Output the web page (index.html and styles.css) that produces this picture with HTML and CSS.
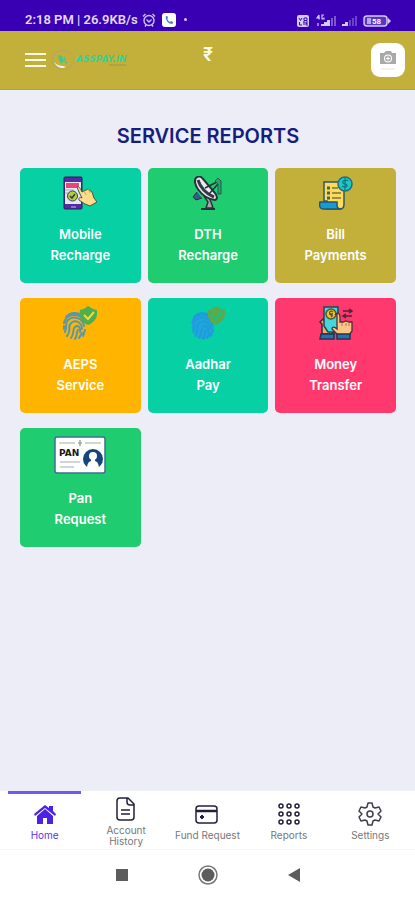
FILE: index.html
```html
<!DOCTYPE html>
<html lang="en">
<head>
    <meta charset="UTF-8">
    <meta name="viewport" content="width=device-width, initial-scale=1.0">
    <title>Service Reports</title>
    <link rel="stylesheet" href="styles.css">
</head>
<body>
    <div class="status-bar">
        <span class="status-text">2:18 PM | 26.9KB/s</span>
        <svg width="14" height="14" viewBox="0 0 14 14" fill="none" stroke="#cfc2f5" stroke-width="1.4">
            <circle cx="7" cy="7.5" r="5"/>
            <path d="M1 3.5 3.5 1M13 3.5 10.500 1M4.500 6.500 7 9l2.500-2.500M4 12l-1 1.500M10 12l1 1.500"/>
        </svg>
        <svg class="call" width="14" height="14" viewBox="0 0 14 14">
            <rect width="14" height="14" rx="3" fill="#fff"/>
            <path d="M4 3c-1 4 2 8 6.500 8l.5-2-2-1-1 1C6.500 8 5.500 7 5.300 6L6 5 5.300 3z" fill="#3f7fd6"/>
        </svg>
        <span class="dot"></span>
        <svg class="signals" width="96" height="16" viewBox="0 0 96 16">
            <rect x="1" y="3" width="12" height="12" rx="2" fill="#d5c9f7"/>
            <path d="M3 6l1.500 2.500L6 6M8 6h3v2.500H8zM3.500 10v3H6M7 10h2M8 10v3M12 10h-2v3h2M10 11.500h1.500" fill="none" stroke="#3a0ab0" stroke-width="1"/>
            <path d="M23 3l-2 3h3M23 3v4.500M28 3h-2v4h2V5.500M22 11v3" fill="none" stroke="#d5c9f7" stroke-width="1.200"/>
            <path d="M25 14v-2h3v2zM28 14v-4h3v4zM31 14V8h3v6z" fill="#d5c9f7"/>
            <path d="M35 14V6h2v8zM38 14V4h2v10z" fill="#7c57d0"/>
            <path d="M46 14v-2h3v2zM49 14v-4h3v4z" fill="#d5c9f7"/>
            <path d="M53 14V8h2v6zM56 14V6h2v8zM59 14V4h2v10z" fill="#6a42c8"/>
            <rect x="68" y="4" width="23" height="10" rx="3" fill="#5a35bf" stroke="#d5c9f7" stroke-width="1.500"/>
            <path d="M92 6l3 3-3 3z" fill="#d5c9f7"/>
            <rect x="71" y="6" width="4" height="6" fill="#b7a4ec"/>
            <text x="76" y="12" class="battery">58</text>
        </svg>
    </div>

    <header class="app-header">
        <button class="menu" aria-label="Menu"><i></i><i></i><i></i></button>
        <a class="brand" href="#" aria-label="ASSPAY.IN">
            <svg width="84" height="24" viewBox="0 0 84 24">
                <ellipse cx="12" cy="12" rx="11" ry="9.500" fill="none" stroke="#b7a267" stroke-width="1"/>
                <path d="M7 7l4 1 2 5-3 3-2-4zM13 8l2 4-2 1zM13 13l4 1-2 2z" fill="#4cc584"/>
                <path d="M3 14c3 3 6 4 9 4l3 1c-4 2-9 1-12-5z" fill="#edf8ef"/>
                <text x="25" y="14" class="brand-name">ASSPAY.IN</text>
                <path d="M58 17h17" stroke="#9a9650" stroke-width="1"/>
            </svg>
        </a>
        <span class="balance">₹</span>
        <button class="photo" aria-label="Photo">
            <svg width="18" height="22" viewBox="0 0 18 22">
                <path d="M1 4h4l2-2h5l1 2h4v11H1z" fill="#a9a9a9"/>
                <circle cx="9" cy="9.500" r="4" fill="#fff"/>
                <circle cx="9" cy="9.500" r="3" fill="#a9a9a9"/>
                <path d="M7 9.500h4M9 7.500v4" stroke="#fff"/>
                <path d="M2 20h14" stroke="#e6e6e6"/>
            </svg>
        </button>
    </header>

    <main>
        <h1>SERVICE REPORTS</h1>
        <div class="services">
            <a class="card teal" href="#">
                <svg width="34" height="34" viewBox="0 0 34 34">
                    <rect x="1" y="1" width="18" height="32" rx="1" fill="#5929a5" stroke="#25224e"/>
                    <rect x="2" y="6" width="16" height="22" fill="#dfe9f5"/>
                    <rect x="3" y="7" width="13" height="5" fill="#e84775"/>
                    <path d="M2 14h9M2 17h5" stroke="#a7adcc"/>
                    <circle cx="9.500" cy="20" r="5" fill="#b4cf3b" stroke="#3b4850"/>
                    <path d="M7 20l2 2 3-4" fill="none" stroke="#303c40" stroke-width="1.500"/>
                    <path d="M8 31h5" stroke="#c4b5f2"/>
                    <path d="M14 11c2-1 3 1 5 5l6-3 4 3 2 6 3 4-7 4-5-2-6-4c-1-2 1-3 3-2l-3-6z" fill="#ffdb8b" stroke="#4f553e"/>
                    <path d="M21 15l2 4M25 13l2 4" stroke="#d5a95d"/>
                </svg>
                <span>Mobile<br>Recharge</span>
            </a>
            <a class="card green" href="#">
                <svg width="34" height="34" viewBox="0 0 34 34">
                    <path d="M13 20l4 6-2 6h7l-2-6-4-8" fill="#aaa" stroke="#29333a" stroke-width="1.500"/>
                    <path d="M6 16l-4 5 3 3 6-2" fill="#315d8b" stroke="#26333e"/>
                    <path d="M5 2C1 6 9 22 24 24c3-1 2-4 0-7L12 3C10 0 7 0 5 2z" fill="#eaeaf0" stroke="#26323b" stroke-width="2"/>
                    <path d="M7 4c2 7 8 14 16 17" fill="none" stroke="#333a43" stroke-width="3"/>
                    <path d="M14 12L26 6M18 18l9-10" stroke="#26323b" stroke-width="1.500"/>
                    <path d="M24 5l3-3 3 3v13h-3V8z" fill="#24a66c" stroke="#25594a"/>
                    <path d="M10 33h14" stroke="#26323b" stroke-width="2"/>
                </svg>
                <span>DTH<br>Recharge</span>
            </a>
            <a class="card gold" href="#">
                <svg width="34" height="34" viewBox="0 0 34 34">
                    <path d="M5 6h20v22c0 3-1 5-4 5H8V25H5z" fill="#ffdb5b" stroke="#315b60" stroke-width="1.500"/>
                    <path d="M1 26h17v3c0 3 1 4 4 4H4c-3 0-4-3-3-7z" fill="#159bd5" stroke="#245673" stroke-width="1.500"/>
                    <path d="M8 12h3M8 17h3M8 22h3" stroke="#3b6557" stroke-width="3"/>
                    <path d="M13 12h6M13 17h9M13 22h9" stroke="#78763d" stroke-width="1.500"/>
                    <circle cx="26" cy="8" r="7" fill="#17cbca" stroke="#246e77" stroke-width="1.500"/>
                    <path d="M29 5c-3-2-6 0-5 2s5 1 4 3-4 1-5 0M26 2v12" fill="none" stroke="#197582" stroke-width="1.300"/>
                </svg>
                <span>Bill<br>Payments</span>
            </a>
            <a class="card orange" href="#">
                <svg width="34" height="34" viewBox="0 0 34 34">
                    <g fill="none" stroke="#5897ad" stroke-width="2" stroke-linecap="round">
                        <path d="M3 11c4-5 11-5 15-2M1 17c2-9 14-11 20-3M2 26c3-7-1-8 3-12 5-5 15-2 16 6"/>
                        <path d="M4 30c5-6 0-9 4-13 5-4 11 0 11 6M8 32c4-5 1-9 4-11 3-3 6 1 5 5M12 33c3-4 1-7 3-9M16 32l3-5M20 30l2-6M1 20v3"/>
                    </g>
                    <path d="M17 4q5-1 8-4 4 3 9 4c1 7-2 12-9 15-7-3-9-8-8-15z" fill="#4caf50"/>
                    <path d="M21 9l4 4 6-7" fill="none" stroke="#ffd43c" stroke-width="2"/>
                </svg>
                <span>AEPS<br>Service</span>
            </a>
            <a class="card teal" href="#">
                <svg width="34" height="34" viewBox="0 0 34 34">
                    <path d="M2 12C5 5 17 4 20 13l3 7c1 7-4 14-11 13-8 0-12-8-11-15z" fill="#1aaad5"/>
                    <g fill="none" stroke="#2694e5" stroke-width="1.500" stroke-linecap="round">
                        <path d="M3 11c4-5 11-5 15-2M1 17c2-9 14-11 20-3M2 26c3-7-1-8 3-12 5-5 15-2 16 6"/>
                        <path d="M4 30c5-6 0-9 4-13 5-4 11 0 11 6M8 32c4-5 1-9 4-11 3-3 6 1 5 5M12 33c3-4 1-7 3-9M16 32l3-5M20 30l2-6"/>
                    </g>
                    <path d="M17 4q5-1 8-4 4 3 9 4c1 7-2 12-9 15-7-3-9-8-8-15z" fill="#58ac4e"/>
                    <path d="M21 9l4 4 6-7" fill="none" stroke="#23c07d" stroke-width="2"/>
                </svg>
                <span>Aadhar<br>Pay</span>
            </a>
            <a class="card pink" href="#">
                <svg width="34" height="34" viewBox="0 0 34 34">
                    <path d="M3 28V18l-2-2 3-3 4 5 7 10z" fill="#e8ad72" stroke="#332d3b" stroke-width="1.500"/>
                    <path d="M5 1h14v25H9L5 20z" fill="#44d8db" stroke="#244450" stroke-width="1.500"/>
                    <circle cx="12" cy="8" r="5" fill="#f5bf2c" stroke="#52582f" stroke-width="1.500"/>
                    <path d="M14 6c-3-2-4 0-3 2s4 1 1 3M10 8h4" fill="none" stroke="#5b5529" stroke-width="1.300"/>
                    <path d="M17 8c2-2 4 0 4 3v5h3l3-1 3 1h3v9l-3 4H19l-6-6c0-2 2-3 5 0V8z" fill="#ffc487" stroke="#493038" stroke-width="1.300"/>
                    <path d="M23 17v3M27 17v3M30 17v3" stroke="#ab7456"/>
                    <path d="M2 28h13v5H1zM18 28h13v5H18z" fill="#2373b3" stroke="#253552" stroke-width="1.500"/>
                    <path d="M24 5h9M30 3l3 2-3 2M24 10h9M27 8l-3 2 3 2" fill="none" stroke="#4b2538" stroke-width="1.500"/>
                </svg>
                <span>Money<br>Transfer</span>
            </a>
            <a class="card green" href="#">
                <svg width="52" height="38" viewBox="0 0 52 38">
                    <rect x="1" y="1" width="50" height="36" rx="2" fill="#fff" stroke="#3d7093" stroke-width="1.500"/>
                    <path d="M5 7h16M31 7h16M6 26h20M6 31h14" stroke="#c5c9cc" stroke-width="1.500"/>
                    <path d="M26 4v6M24 7h4" stroke="#a5a9aa" stroke-width="1.500"/>
                    <text x="5" y="20" class="pan-text">PAN</text>
                    <circle cx="39" cy="23" r="10" fill="#16447d"/>
                    <circle cx="39" cy="20" r="4" fill="#fff"/>
                    <path d="M33 34c0-6 1-8 4-9v-4h4v4c3 1 4 3 4 9z" fill="#fff"/>
                </svg>
                <span>Pan<br>Request</span>
            </a>
        </div>
    </main>

    <footer>
        <nav class="tabs">
            <a class="active" href="#">
                <svg width="24" height="24" viewBox="0 0 24 20" fill="#4c22e6">
                    <path d="M1 10L12 1l4 3V2h4v5l3 3-1 2L12 4 2 12z"/>
                    <path d="M4 12l8-7 8 7v8h-6v-6h-4v6H4z"/>
                </svg>
                <span>Home</span>
            </a>
            <a href="#">
                <svg width="24" height="24" viewBox="0 0 24 24" fill="none" stroke="#22213b" stroke-width="1.500">
                    <path d="M6 1h8l6 6v13q0 3-3 3H6q-3 0-3-3V4q0-3 3-3zM13 1v4q0 3 3 3h4M7 13h9M7 17h9"/>
                </svg>
                <span>Account<br>History</span>
            </a>
            <a href="#">
                <svg width="24" height="24" viewBox="0 0 24 20" fill="none" stroke="#22213b" stroke-width="1.500">
                    <rect x="1" y="2" width="21" height="17" rx="3"/>
                    <path d="M1 7h21" stroke-width="2.500"/>
                    <path d="M5 13h4M7 11v4" stroke-width="2"/>
                </svg>
                <span>Fund Request</span>
            </a>
            <a href="#">
                <svg width="24" height="24" viewBox="0 0 24 22" fill="none" stroke="#22213b" stroke-width="1.500">
                    <circle cx="4" cy="3" r="2"/><circle cx="12" cy="3" r="2"/><circle cx="20" cy="3" r="2"/>
                    <circle cx="4" cy="11" r="2"/><circle cx="12" cy="11" r="2"/><circle cx="20" cy="11" r="2"/>
                    <circle cx="4" cy="19" r="2"/><circle cx="12" cy="19" r="2"/><circle cx="20" cy="19" r="2"/>
                </svg>
                <span>Reports</span>
            </a>
            <a href="#">
                <svg width="24" height="24" viewBox="0 0 24 24" fill="none" stroke="#3f3f4b" stroke-width="1.500" stroke-linejoin="round">
                    <path d="M10 1h4l1 4 2 1 4-1 2 4-3 3 3 3-2 4-4-1-2 1-1 4h-4l-1-4-2-1-4 1-2-4 3-3-3-3 2-4 4 1 2-1z"/>
                    <circle cx="12" cy="12" r="3"/>
                </svg>
                <span>Settings</span>
            </a>
        </nav>
        <div class="system-nav">
            <button aria-label="Recent apps"><svg width="20" height="20" viewBox="0 0 20 20"><path d="M4 4h12v12H4z" fill="#5c5c5c"/></svg></button>
            <button aria-label="Home screen"><svg width="20" height="20" viewBox="0 0 20 20"><circle cx="10" cy="10" r="9" fill="none" stroke="#777" stroke-width="1.500"/><circle cx="10" cy="10" r="6.500" fill="#5c5c5c"/></svg></button>
            <button aria-label="Back"><svg width="20" height="20" viewBox="0 0 20 20"><path d="M4 10l12-7v14z" fill="#5c5c5c"/></svg></button>
        </div>
    </footer>
</body>
</html>
```
FILE: styles.css
```css
* {
    box-sizing: border-box;
}
body {
    display: flex;
    flex-direction: column;
    min-height: 100vh;
    margin: 0;
    background-color: #ecedf6;
    font-family: Inter, "Noto Sans", sans-serif;
}
a {
    text-decoration: none;
}
button {
    padding: 0;
    border: none;
    background: none;
    cursor: pointer;
}
svg {
    display: block;
    flex: none;
}
.status-bar {
    display: flex;
    align-items: center;
    gap: 4px;
    height: 31px;
    padding: 8px 23px 0 25px;
    background-color: #3900b3;
}
.status-text {
    color: #e2daf8;
    font-family: Roboto, sans-serif;
    font-size: 13px;
    font-weight: 600;
}
.call {
    margin-left: 2px;
}
.dot {
    width: 3px;
    height: 3px;
    margin-left: 4px;
    border-radius: 50%;
    background-color: #d5c9f7;
}
.signals {
    margin-left: auto;
}
.battery {
    fill: #fff;
    font-family: Roboto, sans-serif;
    font-size: 8px;
    font-weight: 700;
}
.app-header {
    display: grid;
    grid-template-columns: 20px 1fr auto 1fr 34px;
    align-items: center;
    height: 59px;
    padding: 0 10px 0 25px;
    background-color: #c2b03b;
    border-bottom: 1px solid #b9a51f;
}
.menu {
    display: grid;
    gap: 4px;
    width: 21px;
}
.menu i {
    height: 2px;
    background-color: #fffbe6;
}
.brand {
    margin-left: 6px;
}
.brand-name {
    fill: #3ecf8c;
    font-family: "DejaVu Sans", sans-serif;
    font-size: 9px;
    font-style: italic;
    font-weight: 700;
}
.balance {
    padding-bottom: 12px;
    color: #fffbe6;
    font-size: 18px;
    font-weight: 600;
}
.photo {
    display: grid;
    grid-column: 5;
    place-items: center;
    width: 34px;
    height: 34px;
    border-radius: 9px;
    background-color: #fff;
}
main {
    flex: 1;
    padding: 32px 19px 20px 20px;
}
h1 {
    margin: 0 0 18px;
    color: #161d80;
    font-size: 20px;
    font-weight: 600;
    line-height: 28px;
    text-align: center;
}
.services {
    display: grid;
    grid-template-columns: repeat(3, 1fr);
    gap: 15px 7px;
}
.card {
    display: flex;
    flex-direction: column;
    align-items: center;
    gap: 14px;
    padding: 8px 8px 17px;
    border-radius: 5px;
    color: #fff;
    font-size: 13px;
    font-weight: 600;
    line-height: 21px;
    text-align: center;
}
.teal {
    background-color: #06d0a4;
}
.green {
    background-color: #1fcc70;
}
.gold {
    background-color: #c2b03b;
}
.orange {
    background-color: #ffb400;
}
.pink {
    background-color: #ff386d;
}
.pan-text {
    fill: #171717;
    font-family: "DejaVu Sans", sans-serif;
    font-size: 9px;
    font-weight: 700;
}
footer {
    background-color: #fff;
}
.tabs {
    display: grid;
    grid-template-columns: repeat(5, 1fr);
    height: 59px;
    padding: 0 4px;
    border-bottom: 1px solid #f6f6f6;
}
.tabs a {
    display: flex;
    flex-direction: column;
    align-items: center;
    justify-content: center;
    gap: 4px;
    color: #777;
    font-size: 10px;
    line-height: 11px;
    text-align: center;
    border-top: 3px solid transparent;
}
.tabs .active {
    margin: 0 4px;
    color: #5b35e8;
    border-top-color: #7556ee;
}
.system-nav {
    display: flex;
    justify-content: center;
    gap: 66px;
    padding: 15px 0;
}
```
